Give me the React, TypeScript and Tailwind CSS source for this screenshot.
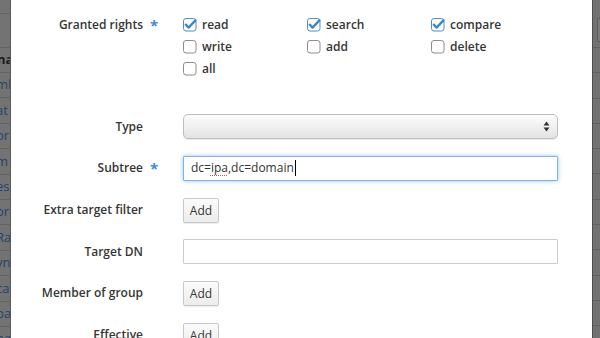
import React from "react";

const font = { fontFamily: '"Open Sans", "Liberation Sans", sans-serif' };

const leftRows = ["mb", "at", "or", "m", "es", "ord", "Ra", "yn", "cat", "pa", "na"];

function CheckBox({ checked }: { checked?: boolean }) {
    return (
        <svg width="14" height="14" viewBox="0 0 14 14" className="shrink-0">
            <rect
                x="0.5"
                y="0.5"
                width="12.5"
                height="12.5"
                rx="2.5"
                fill="#fff"
                stroke={checked ? "#4a8fcf" : "#8c8c8c"}
                strokeWidth="1"
            />
            {checked && (
                <path d="M2.8 6.6 L5.6 9.6 L12.4 2.4" fill="none" stroke="#3f87cc" strokeWidth="2.3" strokeLinecap="round" strokeLinejoin="round" />
            )}
        </svg>
    );
}

function Check({ label, checked }: { label: string; checked?: boolean }) {
    return (
        <div className="flex h-[22px] items-center gap-[5px]">
            <CheckBox checked={checked} />
            <span className="text-[12px] font-semibold text-[#363636]">{label}</span>
        </div>
    );
}

function AddButton() {
    return (
        <button className="h-[25px] w-[36px] rounded-[2px] border border-[#c8c8c8] bg-gradient-to-b from-[#fbfbfb] to-[#ececec] text-[12px] font-medium text-[#363636] shadow-[0_1px_1px_rgba(0,0,0,0.08)]">
            Add
        </button>
    );
}

function Row({ label, required, children }: { label: string; required?: boolean; children: React.ReactNode }) {
    return (
        <div className="flex h-[41.6px] items-center">
            <div className="w-[132px] text-right text-[12px] font-semibold text-[#363636]">{label}</div>
            <div className="w-[40px] pl-[7px] text-[15px] font-bold leading-none text-[#3f8ad2]">{required ? "*" : ""}</div>
            <div className="flex-1">{children}</div>
        </div>
    );
}

export default function App() {
    return (
        <div className="flex h-[338px] w-[600px] overflow-hidden bg-white" style={font}>
            {/* dimmed page behind the dialog, left side */}
            <div className="flex w-[11px] shrink-0 flex-col overflow-hidden border-r border-[#5a5a5a] bg-[#737373]">
                <div className="h-[14px] shrink-0 border-b border-[#656565]" />
                <div className="h-[34px] shrink-0 border-b border-[#656565]" />
                <div className="flex h-[25px] shrink-0 items-center border-b border-[#646464] whitespace-nowrap">
                    <span className="-ml-[3px] text-[13px] font-bold text-[#1c1c1c]">na</span>
                </div>
                {leftRows.map((t, i) => (
                    <div key={i} className="flex h-[25.4px] shrink-0 items-center border-b border-[#656565] whitespace-nowrap">
                        <span className="-ml-[4px] text-[13px] text-[#23456a]">{t}</span>
                    </div>
                ))}
            </div>

            {/* dialog */}
            <div className="flex-1 pt-[14px]">
                <div className="flex">
                    <div className="flex h-[22px] w-[132px] items-center justify-end text-[12px] font-semibold text-[#363636]">Granted rights</div>
                    <div className="flex h-[22px] w-[40px] items-center pl-[7px] text-[15px] font-bold text-[#3f8ad2]">*</div>
                    <div className="grid grid-cols-[124px_124px_124px]">
                        <Check label="read" checked />
                        <Check label="search" checked />
                        <Check label="compare" checked />
                        <Check label="write" />
                        <Check label="add" />
                        <Check label="delete" />
                        <Check label="all" />
                    </div>
                </div>

                <div className="mt-[26px] pr-[34px]">
                    <Row label="Type">
                        <div className="flex h-[25px] items-center justify-end rounded-[5px] border border-[#bdbdbd] bg-gradient-to-b from-[#fcfcfc] to-[#e4e4e4] pr-[7px] shadow-[0_1px_1px_rgba(0,0,0,0.1)]">
                            <svg width="7" height="11" viewBox="0 0 7 11">
                                <path d="M3.5 0.5 L6.5 4.5 L0.5 4.5 Z" fill="#333" />
                                <path d="M3.5 10.5 L6.5 6.5 L0.5 6.5 Z" fill="#333" />
                            </svg>
                        </div>
                    </Row>
                    <Row label="Subtree" required>
                        <div className="flex h-[25px] items-center rounded-[1px] border border-[#7fb4e3] bg-white pl-[7px] text-[12px] text-[#333] shadow-[0_0_4px_rgba(102,170,233,0.7)]">
                            <span>dc=</span>
                            <span className="underline decoration-dotted decoration-[#e05050] underline-offset-[3px]">ipa</span>
                            <span>,dc=domain</span>
                            <span className="ml-px h-[16px] w-[1.5px] bg-black" />
                        </div>
                    </Row>
                    <Row label="Extra target filter">
                        <AddButton />
                    </Row>
                    <Row label="Target DN">
                        <div className="h-[25px] rounded-[1px] border border-[#cccccc] bg-white" />
                    </Row>
                    <Row label="Member of group">
                        <AddButton />
                    </Row>
                    <Row label="Effective">
                        <AddButton />
                    </Row>
                </div>
            </div>

            {/* dimmed page behind the dialog, right side */}
            <div className="flex w-[8px] shrink-0 flex-col border-l border-[#4e4e4e] bg-[#727272]">
                <div className="h-[18px] shrink-0" />
                <div className="ml-[4px] h-[24px] shrink-0 rounded-l-[2px] border border-r-0 border-[#5e5e5e] bg-[#7a7a7a]" />
                <div className="h-[6px] shrink-0 border-b border-[#626262]" />
                {Array.from({ length: 12 }).map((_, i) => (
                    <div key={i} className="h-[25.3px] shrink-0 border-b border-[#626262]" />
                ))}
            </div>
        </div>
    );
}
